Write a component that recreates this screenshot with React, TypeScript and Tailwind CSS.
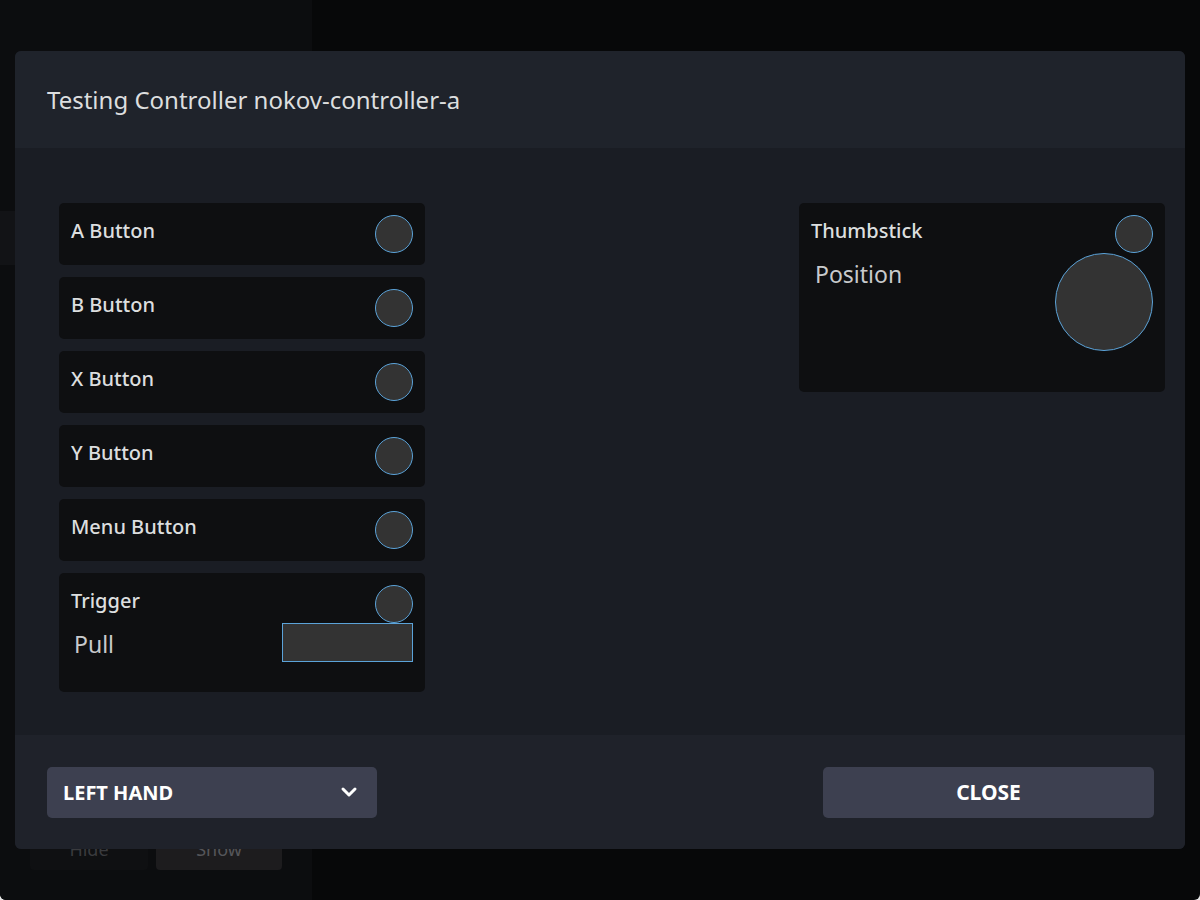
import { ChevronDown } from 'lucide-react';

const buttons = ['A Button', 'B Button', 'X Button', 'Y Button', 'Menu Button'];

function Dot({ className = '' }: { className?: string }) {
  return <div className={`h-[38px] w-[38px] rounded-full border border-[#5ba3d9] bg-[#333333] ${className}`} />;
}

function ButtonCard({ label }: { label: string }) {
  return (
    <div className="flex h-[62px] items-start justify-between rounded-[5px] bg-[#0e0f11] pl-3 pr-3 pt-3">
      <span className="mt-[4px] text-[20px] font-medium leading-[24px] text-[#dcdedf]">{label}</span>
      <Dot />
    </div>
  );
}

export default function App() {
  return (
    <div className="h-[900px] w-[1200px] bg-[#e8e8e8]" style={{ fontFamily: '"Noto Sans", "Open Sans", sans-serif' }}>
      <div className="relative flex h-full w-full overflow-hidden rounded-b-[6px] bg-[#070809]">
        {/* page behind the overlay */}
        <div className="flex h-full w-[312px] flex-col bg-[#0c0d0f]">
          <div className="mt-[211px] h-[54px] w-full bg-[#121316]" />
          <div className="mt-auto mb-[30px] flex gap-2 px-[30px]">
            <div className="flex h-[42px] w-[118px] items-center justify-center rounded-[4px] bg-[#0f1012] text-[18px] text-[#3a3b3e]">Hide</div>
            <div className="flex h-[42px] w-[126px] items-center justify-center rounded-[4px] bg-[#1d1c1e] text-[18px] text-[#55565a]">Show</div>
          </div>
        </div>

        {/* modal */}
        <div className="absolute left-[15px] top-[51px] flex h-[798px] w-[1170px] flex-col overflow-hidden rounded-[6px] bg-[#1a1d24]">
          <div className="flex h-[97px] items-center bg-[#1f232b] px-8">
            <h1 className="text-[24px] font-normal text-[#dcdedf]">Testing Controller nokov-controller-a</h1>
          </div>

          <div className="flex flex-1 items-start justify-between pl-[44px] pr-[20px] pt-[55px]">
            <div className="flex w-[366px] flex-col gap-3">
              {buttons.map((b) => (
                <ButtonCard key={b} label={b} />
              ))}
              <div className="flex h-[119px] flex-col rounded-[5px] bg-[#0e0f11] px-3 pt-3">
                <div className="flex items-start justify-between">
                  <span className="mt-[4px] text-[20px] font-medium leading-[24px] text-[#dcdedf]">Trigger</span>
                  <Dot />
                </div>
                <div className="flex items-start justify-between">
                  <span className="ml-[3px] mt-[6px] text-[23px] leading-[30px] text-[#c8cacc]">Pull</span>
                  <div className="h-[39px] w-[131px] border border-[#5ba3d9] bg-[#333333]" />
                </div>
              </div>
            </div>

            <div className="flex h-[189px] w-[366px] items-start justify-between rounded-[5px] bg-[#0e0f11] px-3 pt-3">
              <div className="flex flex-col">
                <span className="mt-[4px] text-[20px] font-medium leading-[24px] text-[#dcdedf]">Thumbstick</span>
                <span className="ml-[4px] mt-[16px] text-[23px] leading-[30px] text-[#c8cacc]">Position</span>
              </div>
              <div className="flex flex-col items-end">
                <Dot />
                <div className="h-[98px] w-[98px] rounded-full border border-[#5ba3d9] bg-[#333333]" />
              </div>
            </div>
          </div>

          <div className="flex h-[114px] items-center justify-between bg-[#1f222a] pl-8 pr-[31px]">
            <div className="flex h-[51px] w-[330px] items-center justify-between rounded-[5px] bg-[#3d4050] pl-4 pr-4">
              <span className="mt-[2px] text-[20px] font-bold text-white">LEFT HAND</span>
              <ChevronDown className="h-6 w-6 text-white" strokeWidth={3} />
            </div>
            <div className="flex h-[51px] w-[331px] items-center justify-center rounded-[5px] bg-[#3d4050]">
              <span className="mt-[2px] text-[21px] font-bold text-white">CLOSE</span>
            </div>
          </div>
        </div>
      </div>
    </div>
  );
}
